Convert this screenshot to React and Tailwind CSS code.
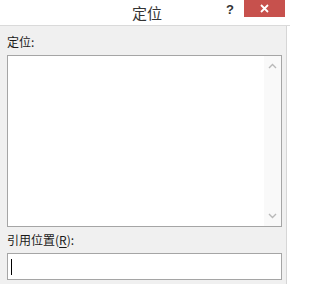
import React from 'react';

const font = { fontFamily: '"Noto Sans CJK SC", "Liberation Sans", sans-serif' };

const Chevron = ({ up }) => (
    <svg width="9" height="6" viewBox="0 0 9 6" className="block">
        <path
            d={up ? 'M1 5 L4.5 1.5 L8 5' : 'M1 1 L4.5 4.5 L8 1'}
            fill="none"
            stroke="#b9b9b9"
            strokeWidth="1.4"
        />
    </svg>
);

const App = () => {
    return (
        <div className="w-[290px] h-[284px] bg-white overflow-hidden flex flex-col" style={font}>
            {/* Title bar */}
            <div className="relative h-[26px] shrink-0 bg-white border-b border-[#dadada] flex items-center justify-center">
                <span className="text-[15px] leading-none text-[#333] ml-[4px] mt-[-1px]">定位</span>
                <span className="absolute left-[226px] top-[0px] text-[13px] font-bold text-[#333]" style={{ fontFamily: '"Liberation Sans", sans-serif' }}>?</span>
                <div className="absolute left-[244px] top-0 w-[41px] h-[17px] bg-[#c7514d] flex items-center justify-center">
                    <svg width="9" height="9" viewBox="0 0 9 9">
                        <path d="M1 1 L8 8 M8 1 L1 8" stroke="#fff" strokeWidth="1.8" />
                    </svg>
                </div>
            </div>

            {/* Body */}
            <div className="flex-1 flex">
                <div className="w-[287px] bg-[#f0f0f0] border-r border-[#d6d6d6] flex flex-col pl-[7px] pt-[8px]">
                    <div className="text-[12px] leading-[16px] text-[#1a1a1a]">定位:</div>
                    <div className="mt-[5px] w-[275px] h-[172px] bg-white border border-[#a5a5a5] flex justify-end">
                        <div className="w-[17px] bg-[#f9f9f9] flex flex-col justify-between items-center py-[7px]">
                            <Chevron up />
                            <Chevron />
                        </div>
                    </div>
                    <div className="mt-[5px] text-[12px] leading-[16px] text-[#1a1a1a]">
                        引用位置(<span className="underline underline-offset-2">R</span>):
                    </div>
                    <div className="mt-[5px] w-[275px] h-[27px] bg-white border border-[#a5a5a5] flex items-center pl-[3px]">
                        <div className="w-[1px] h-[16px] bg-black" />
                    </div>
                </div>
                <div className="flex-1 bg-white" />
            </div>
        </div>
    );
};

export default App;
